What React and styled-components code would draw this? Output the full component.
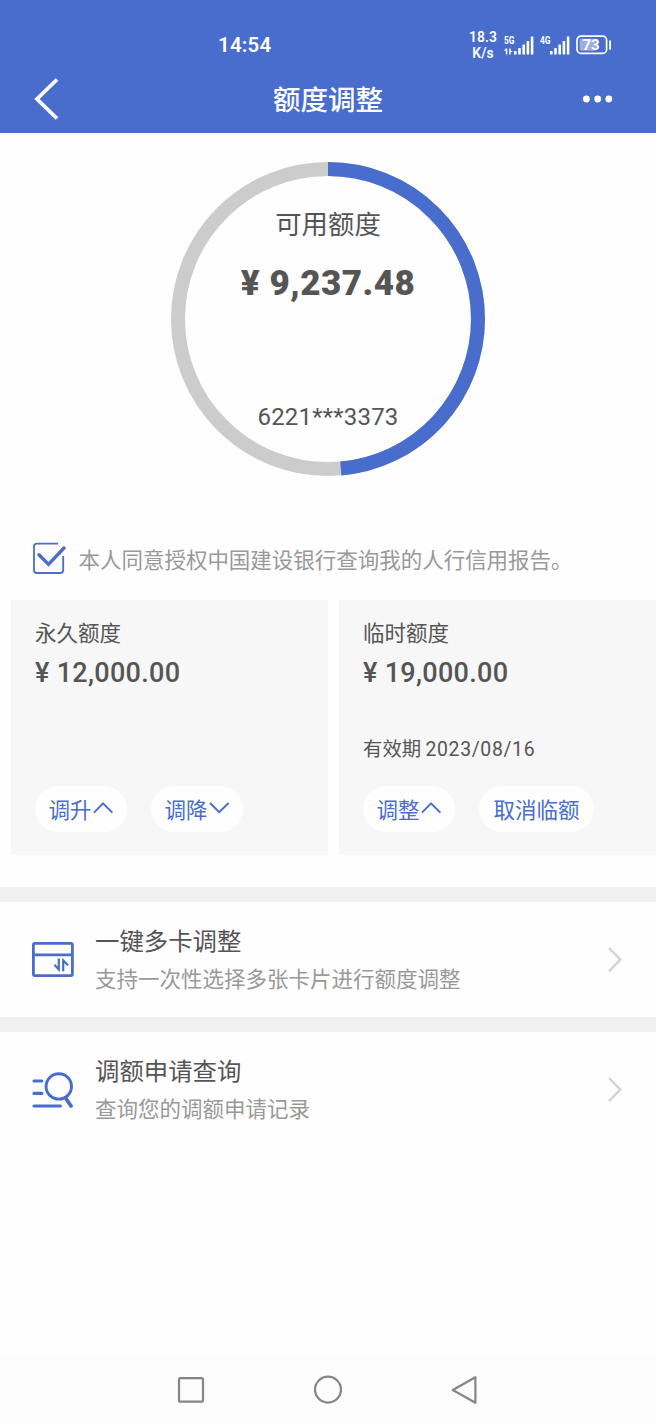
import React from "react";
import styled, { createGlobalStyle } from 'styled-components'

const BLUE = '#486dcc';

const cards = [
    {
        title: '永久额度',
        amount: '12,000.00',
        actions: [{ label: '调升', arrow: 'up' }, { label: '调降', arrow: 'down' }],
    },
    {
        title: '临时额度',
        amount: '19,000.00',
        expire: '2023/08/16',
        actions: [{ label: '调整', arrow: 'up' }, { label: '取消临额' }],
    },
];

export default function App(){
    return(
        <>
    <GlobalStyle />
    <Page>
        <Header>
            <StatusBar>
                <Clock>14:54</Clock>
                <StatusIcons>
                    <Speed><span>18.3</span><span>K/s</span></Speed>
                    <SignalIcon label="5G" data />
                    <SignalIcon label="4G" />
                    <BatteryIcon />
                </StatusIcons>
            </StatusBar>
            <NavBar>
                <BackIcon />
                <h1>额度调整</h1>
                <MoreIcon />
            </NavBar>
        </Header>
        <QuotaSection>
            <QuotaRing used={9237.48} total={19000} />
        </QuotaSection>
        <Agreement>
            <CheckIcon />
            <p>本人同意授权中国建设银行查询我的人行信用报告。</p>
        </Agreement>
        <Cards>
            {cards.map((card) => (
                <Card key={card.title}>
                    <h2>{card.title}</h2>
                    <Amount>¥ {card.amount}</Amount>
                    <Expire>{card.expire && <>有效期 <span>{card.expire}</span></>}</Expire>
                    <Actions>
                        {card.actions.map((item) => (
                            <Pill key={item.label} $wide={!item.arrow}>
                                {item.label}
                                {item.arrow && <ArrowIcon dir={item.arrow} />}
                            </Pill>
                        ))}
                    </Actions>
                </Card>
            ))}
        </Cards>
        <Divider />
        <Entry>
            <CardIcon />
            <EntryText>
                <h3>一键多卡调整</h3>
                <p>支持一次性选择多张卡片进行额度调整</p>
            </EntryText>
            <ChevronIcon />
        </Entry>
        <Divider />
        <Entry>
            <SearchIcon />
            <EntryText>
                <h3>调额申请查询</h3>
                <p>查询您的调额申请记录</p>
            </EntryText>
            <ChevronIcon />
        </Entry>
        <SystemNav>
            <svg width="28" height="30" viewBox="0 0 28 30"><rect x="2" y="3.2" width="24" height="23.5" rx="1.2" /></svg>
            <svg width="28" height="30" viewBox="0 0 28 30"><circle cx="14" cy="14.6" r="13" /></svg>
            <svg width="28" height="30" viewBox="0 0 28 30"><path d="M1.8 15 L24.4 2.2 V27.8 Z" /></svg>
        </SystemNav>
    </Page>
        </>
    )
}

function QuotaRing({ used, total }){
    const length = 2 * Math.PI * 150;
    return(
        <Ring>
            <svg width="314" height="314" viewBox="0 0 314 314">
                <circle cx="157" cy="157" r="150" stroke="#cccccc" />
                <circle cx="157" cy="157" r="150" stroke={BLUE} transform="rotate(-90 157 157)"
                    strokeDasharray={`${length * used / total} ${length}`} />
            </svg>
            <RingText>
                <h2>可用额度</h2>
                <strong>¥ {used.toLocaleString('en-US')}</strong>
                <span>6221***3373</span>
            </RingText>
        </Ring>
    )
}

function BackIcon(){
    return(
        <svg width="30" height="44" viewBox="0 0 30 44" fill="none" stroke="#fff" strokeWidth="3.8">
            <path d="M26 2.5 L6 22 L26 41.5" />
        </svg>
    )
}

function MoreIcon(){
    return(
        <svg width="30" height="8" viewBox="0 0 30 8" fill="#fff">
            <circle cx="3.4" cy="4" r="3.4" />
            <circle cx="14.7" cy="4" r="3.4" />
            <circle cx="25.8" cy="4" r="3.4" />
        </svg>
    )
}

function SignalIcon({ label, data }){
    return(
        <Signal>
            <small>{label}</small>
            <svg width="30" height="19" viewBox="0 0 30 19" fill="#fff">
                {data && (
                    <g>
                        <path d="M1.8 12.6 h1.5 v5.8 h-1.5 v-3.6 h-1.8 z" />
                        <path d="M5.2 12.6 h1.4 v2 l2.2 1 -2.2 1 v1.8 h-1.4 z" />
                    </g>
                )}
                <rect x="10" y="15" width="2.6" height="3.5" rx=".6" />
                <rect x="14.2" y="12" width="2.6" height="6.5" rx=".6" />
                <rect x="18.4" y="8.5" width="2.6" height="10" rx=".6" />
                <rect x="22.6" y="5" width="2.6" height="13.5" rx=".6" />
                <rect x="26.8" y="0.5" width="2.6" height="18" rx=".6" />
            </svg>
        </Signal>
    )
}

function BatteryIcon(){
    return(
        <Battery>
            <svg width="36" height="20" viewBox="0 0 36 20">
                <rect x="1" y="1.2" width="29.6" height="17.2" rx="4" fill="none" stroke="#fff" strokeWidth="1.7" />
                <rect x="3.6" y="3.8" width="17" height="12" rx="2" fill="#fff" opacity=".45" />
                <rect x="33.2" y="5.2" width="1.8" height="9.6" rx=".9" fill="#fff" />
            </svg>
            <b>73</b>
        </Battery>
    )
}

function CheckIcon(){
    return(
        <svg width="34" height="34" viewBox="0 0 34 34" fill="none" stroke={BLUE}>
            <path d="M26 1.6 H5 Q2 1.6 2 4.6 V28 Q2 31 5 31 H28.2 Q31.2 31 31.2 28 V14" strokeWidth="1.8" />
            <path d="M7 12.8 L16.5 22.4 L32 6" strokeWidth="3.4" strokeLinecap="round" />
        </svg>
    )
}

function ArrowIcon({ dir }){
    return(
        <svg width="21" height="14" viewBox="0 0 21 14" fill="none" stroke={BLUE} strokeWidth="2">
            <path d={dir === 'up' ? 'M1 11.6 L10 2.4 L19.4 11.6' : 'M1 2 L10.2 11.2 L19.6 2'} />
        </svg>
    )
}

function CardIcon(){
    return(
        <svg width="42" height="36" viewBox="0 0 42 36" fill="none" stroke={BLUE} strokeWidth="2.8">
            <rect x="1.4" y="1.4" width="39" height="32.2" rx="1.5" />
            <path d="M1.4 12.8 H40.5" />
            <path d="M26.8 16.4 V27.4 L22.4 22.8" strokeWidth="2.2" />
            <path d="M31.2 29.2 V18.4 L36 23.2" strokeWidth="2.2" />
        </svg>
    )
}

function SearchIcon(){
    return(
        <svg width="42" height="36" viewBox="0 0 42 36" fill="none" stroke={BLUE} strokeWidth="3.2" strokeLinecap="round">
            <path d="M2 9 H9.8 M2 21.4 H9.8 M2 34 H28.4" />
            <circle cx="26.8" cy="14.4" r="12.7" strokeWidth="2.9" />
            <path d="M33.6 26 L39 34" strokeWidth="3.8" />
        </svg>
    )
}

function ChevronIcon(){
    return(
        <svg width="16" height="26" viewBox="0 0 16 26" fill="none" stroke="#d4d4d4" strokeWidth="2.4">
            <path d="M2 1 L13.4 12.6 L2 24.2" />
        </svg>
    )
}

const GlobalStyle = createGlobalStyle`
*{
    margin: 0;
    padding: 0;
    box-sizing: border-box;
}
body{
    background-color: #fefefe;
    font-family: 'Noto Sans CJK SC', sans-serif;
    color: #555;
}
svg{
    display: block;
    flex-shrink: 0;
}
`;

const Page = styled.main`
width: 100%;
height: 1424px;
display: flex;
flex-direction: column;
overflow: hidden;
`;

const Header = styled.header`
height: 133px;
background-color: ${BLUE};
color: #fff;
padding-top: 26px;
`;

const StatusBar = styled.div`
height: 38px;
display: flex;
align-items: center;
justify-content: space-between;
padding: 0 44px 0 218px;
font-family: Roboto, sans-serif;
`;

const Clock = styled.time`
font-size: 20.5px;
font-weight: 600;
letter-spacing: .2px;
`;

const StatusIcons = styled.div`
display: flex;
align-items: center;
`;

const Speed = styled.div`
display: flex;
flex-direction: column;
align-items: center;
font-size: 13.8px;
line-height: 16px;
font-weight: 600;
margin-right: 7px;
letter-spacing: .1px;
`;

const Signal = styled.div`
position: relative;
margin-right: 6px;
small{
    position: absolute;
    left: 0;
    top: -1px;
    font-size: 10.5px;
    line-height: 11px;
    font-weight: 700;
    transform: scaleX(.8);
    transform-origin: left;
}
`;

const Battery = styled.div`
position: relative;
b{
    position: absolute;
    left: 0;
    top: 0;
    width: 30px;
    text-align: center;
    font-size: 15px;
    line-height: 20px;
}
`;

const NavBar = styled.nav`
height: 70px;
display: flex;
align-items: center;
justify-content: space-between;
padding: 0 43px 0 31px;
h1{
    font-size: 27.5px;
    font-weight: 500;
    line-height: 40px;
    padding: 0 0 2px 12px;
}
`;

const QuotaSection = styled.section`
height: 409px;
padding-top: 28.5px;
display: flex;
justify-content: center;
`;

const Ring = styled.div`
width: 314px;
height: 314px;
display: grid;
svg, div{
    grid-area: 1 / 1;
}
circle{
    fill: none;
    stroke-width: 14px;
}
`;

const RingText = styled.div`
display: flex;
flex-direction: column;
align-items: center;
padding-top: 41px;
h2{
    font-size: 26.4px;
    line-height: 40px;
    font-weight: 400;
}
strong{
    font-family: Roboto, sans-serif;
    font-size: 35px;
    line-height: 40px;
    font-weight: 900;
    margin-top: 21px;
    letter-spacing: .5px;
    white-space: nowrap;
}
span{
    font-family: Roboto, sans-serif;
    font-size: 24px;
    line-height: 30px;
    margin-top: 98px;
    letter-spacing: .2px;
}
`;

const Agreement = styled.label`
height: 58px;
display: flex;
align-items: flex-start;
padding-left: 32px;
p{
    margin-left: 12.5px;
    font-size: 21.5px;
    line-height: 34px;
    color: #999;
    letter-spacing: -.02px;
}
`;

const Cards = styled.section`
display: grid;
grid-template-columns: 317px 317px;
column-gap: 11px;
padding-left: 11px;
margin-bottom: 32px;
`;

const Card = styled.article`
height: 255px;
background-color: #f7f7f7;
padding: 16px 24px 0;
h2{
    font-size: 21.5px;
    line-height: 32px;
    font-weight: 400;
}
`;

const Amount = styled.div`
margin-top: 7px;
font-family: Roboto, sans-serif;
font-size: 27px;
line-height: 36px;
font-weight: 500;
letter-spacing: .3px;
`;

const Expire = styled.div`
height: 30px;
margin-top: 42px;
font-size: 19.4px;
line-height: 30px;
span{
    font-family: Roboto, sans-serif;
    letter-spacing: .65px;
}
`;

const Actions = styled.div`
display: flex;
gap: 24px;
margin-top: 23px;
`;

const Pill = styled.button`
width: ${(props) => props.$wide ? '115px' : '92px'};
height: 46px;
display: flex;
align-items: center;
justify-content: center;
gap: 1px;
border: none;
border-radius: 23px;
background-color: #fefefe;
color: ${BLUE};
font-family: inherit;
font-size: 21.5px;
padding-bottom: 2px;
`;

const Divider = styled.div`
height: 15px;
background-color: #f1f1f1;
`;

const Entry = styled.section`
height: 115px;
display: flex;
align-items: center;
padding: 0 33px 0 32px;
`;

const EntryText = styled.div`
flex: 1;
margin-left: 21px;
padding-bottom: 2px;
h3{
    font-size: 24.4px;
    line-height: 38px;
    font-weight: 400;
}
p{
    font-size: 21.5px;
    line-height: 38px;
    color: #999;
}
`;

const SystemNav = styled.footer`
height: 69px;
margin-top: auto;
background-color: #fcfcfc;
display: flex;
justify-content: center;
align-items: center;
gap: 109px;
svg{
    fill: none;
    stroke: #858585;
    stroke-width: 2.2px;
    stroke-linejoin: round;
}
`;
